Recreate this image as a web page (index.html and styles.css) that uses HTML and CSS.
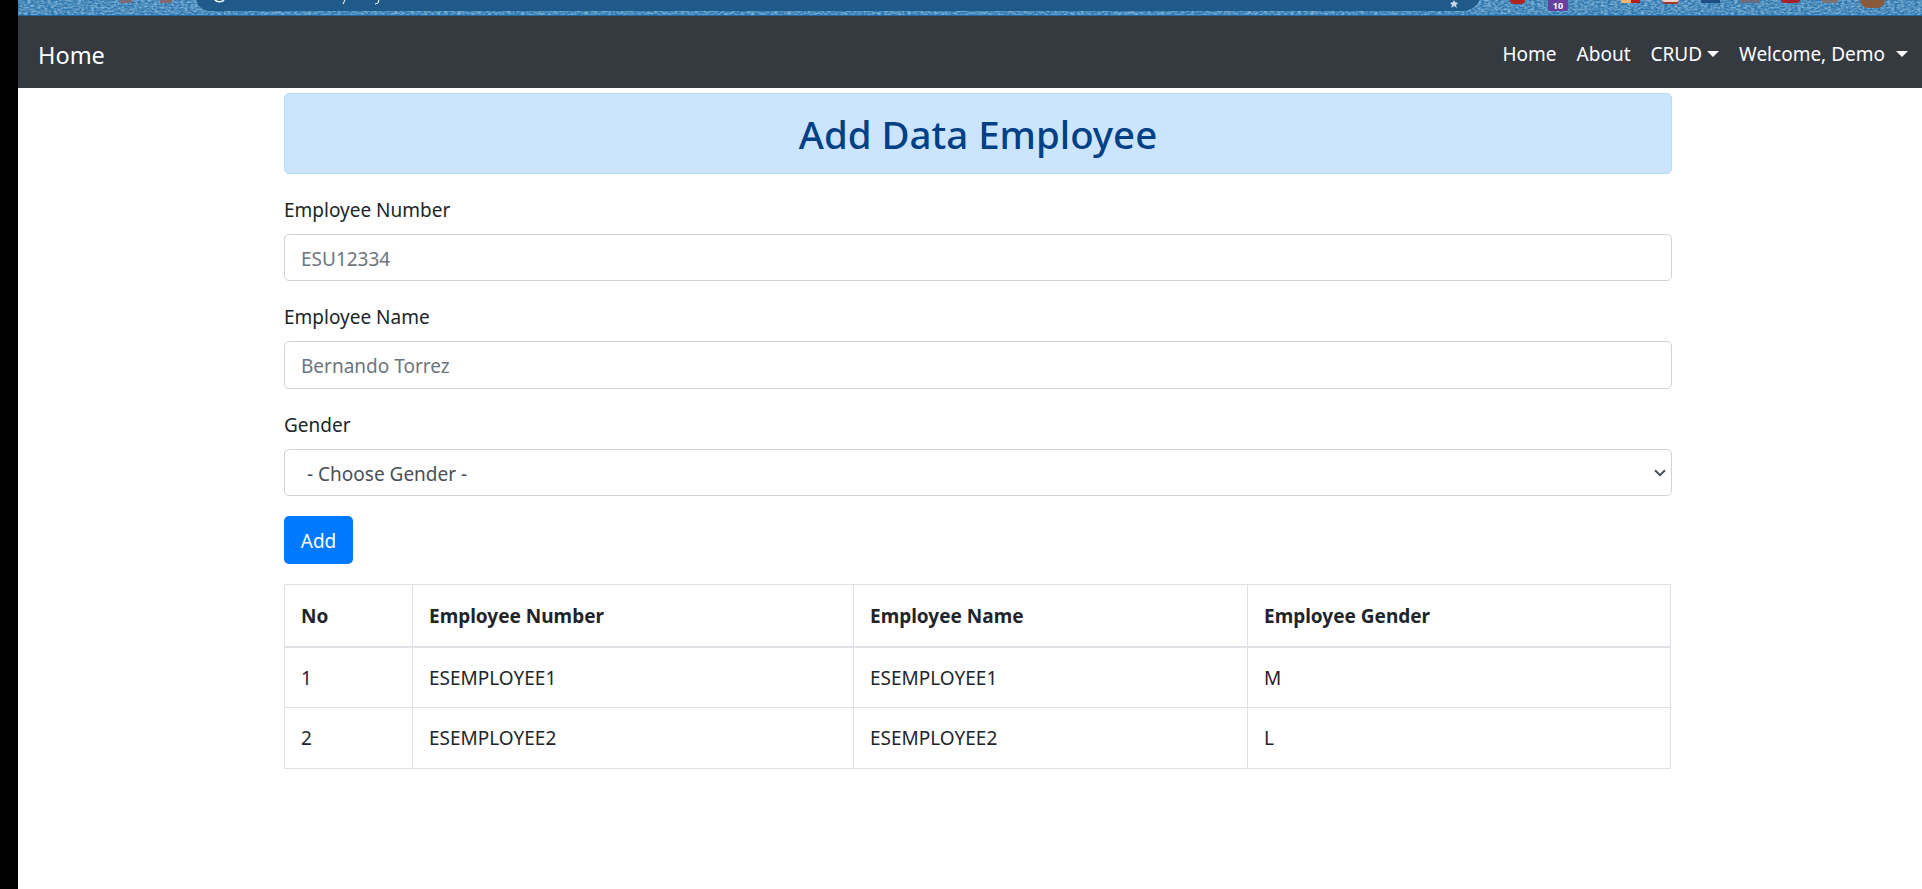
FILE: index.html
```html
<!DOCTYPE html>
<html lang="en">
<head>
  <meta charset="UTF-8">
  <title>Add Data Employee</title>
  <link rel="stylesheet" href="styles.css">
</head>
<body>
  <div class="black-edge"></div>
  <div class="page">
    <div class="desktop-strip">
      <svg class="wallpaper" width="1904" height="16">
        <filter id="grain" x="0" y="0" width="100%" height="100%">
          <feTurbulence type="fractalNoise" baseFrequency="0.3 0.55" numOctaves="2" seed="4"/>
          <feColorMatrix type="matrix" values="0 0 0 0 0.5  0 0 0 0 0.75  0 0 0 0 0.9  1.3 0 0 0 -0.42"/>
        </filter>
        <rect width="1904" height="16" fill="#2f76ae"/>
        <rect width="1904" height="16" filter="url(#grain)"/>
        <rect y="15" width="1904" height="1" fill="#1f6aa5"/>
      </svg>
      <div class="address-tab">
        <svg class="tab-bits" width="1286" height="11">
          <path d="M19 0a5 3 0 0 0 9 0" fill="none" stroke="#fff" stroke-width="1.5"/>
          <path d="M149 0l-2 4M183 0l-1 3-3 1" fill="none" stroke="#fff"/>
          <path d="M1258 0l1 2 3 1-2 2 1 3-3-2-3 2 1-3-2-2 3-1z" fill="#c9d6e2"/>
        </svg>
      </div>
      <span class="tray tray-a"></span>
      <span class="tray tray-b"></span>
      <span class="tray tray-red"></span>
      <span class="tray-badge">10</span>
      <span class="tray tray-orange"></span>
      <span class="tray tray-cup"></span>
      <span class="tray tray-navy"></span>
      <span class="tray tray-grey"></span>
      <span class="tray tray-red2"></span>
      <span class="tray tray-grey2"></span>
      <span class="tray tray-avatar"></span>
    </div>

    <nav class="navbar">
      <a class="brand" href="#">Home</a>
      <ul class="nav-links">
        <li><a href="#">Home</a></li>
        <li><a href="#">About</a></li>
        <li><a class="caret" href="#">CRUD</a></li>
        <li><a class="caret caret-wide" href="#">Welcome, Demo</a></li>
      </ul>
    </nav>

    <main class="container">
      <div class="alert"><h1>Add Data Employee</h1></div>
      <form>
        <div class="form-group">
          <label for="empNumber">Employee Number</label>
          <input type="text" id="empNumber" class="form-control" placeholder="ESU12334">
        </div>
        <div class="form-group">
          <label for="empName">Employee Name</label>
          <input type="text" id="empName" class="form-control" placeholder="Bernando Torrez">
        </div>
        <div class="form-group last">
          <label for="empGender">Gender</label>
          <div class="select-wrap">
            <select id="empGender" class="form-control">
              <option>- Choose Gender -</option>
            </select>
            <svg class="chevron" width="12" height="8" viewBox="0 0 12 8"><path d="M1 1.2l5 5 5-5" fill="none" stroke="#495057" stroke-width="2"/></svg>
          </div>
        </div>
        <button type="submit" class="btn">Add</button>
      </form>

      <table class="table">
        <colgroup>
          <col class="col-no"><col class="col-number"><col class="col-name"><col class="col-gender">
        </colgroup>
        <thead>
          <tr><th>No</th><th>Employee Number</th><th>Employee Name</th><th>Employee Gender</th></tr>
        </thead>
        <tbody>
          <tr><td>1</td><td>ESEMPLOYEE1</td><td>ESEMPLOYEE1</td><td>M</td></tr>
          <tr><td>2</td><td>ESEMPLOYEE2</td><td>ESEMPLOYEE2</td><td>L</td></tr>
        </tbody>
      </table>
    </main>
  </div>
</body>
</html>
```
FILE: styles.css
```css
* {
  box-sizing: border-box;
}
html, body {
  height: 100%;
}
body {
  margin: 0;
  display: flex;
  overflow: hidden;
  background: #fff;
  color: #212529;
  font-family: "Noto Sans", "Open Sans", sans-serif;
  font-size: 19px;
  line-height: 30px;
}
.black-edge {
  width: 18px;
  flex: none;
  background: #000;
}
.page {
  flex: 1;
  min-width: 0;
}

/* bit of the desktop above the browser */
.desktop-strip {
  position: relative;
  height: 16px;
  overflow: hidden;
}
.wallpaper {
  position: absolute;
  left: 0;
  top: 0;
  display: block;
}
.address-tab {
  position: absolute;
  left: 178px;
  top: -10px;
  width: 1286px;
  height: 21px;
  padding-top: 10px;
  background: #1f5a8a;
  border-radius: 0 0 20px 14px;
}
.tab-bits {
  display: block;
}
.tray {
  position: absolute;
  top: 0;
  height: 3px;
}
.tray-a { left: 102px; width: 12px; background: #7d6a72; }
.tray-b { left: 142px; width: 12px; background: #85676e; }
.tray-red { left: 1492px; width: 15px; height: 4px; background: #b5211f; border-radius: 0 0 7px 7px; }
.tray-badge {
  position: absolute;
  left: 1530px;
  top: 0;
  width: 20px;
  height: 11px;
  padding-top: 1px;
  background: #6b3fa0;
  border-radius: 0 0 2px 2px;
  color: #fff;
  font-size: 9px;
  font-weight: 700;
  line-height: 10.4px;
  text-align: center;
}
.tray-orange { left: 1603px; width: 19px; background: linear-gradient(to right, #eeb36d 50%, #bb1d1d 50%); }
.tray-cup { left: 1644px; width: 17px; height: 4px; background: #e9d5c8; border-bottom: 2px solid #a8322c; border-radius: 0 0 6px 6px; }
.tray-navy { left: 1683px; width: 19px; background: #1d4f85; }
.tray-grey { left: 1722px; width: 20px; background: #6b6d7c; }
.tray-red2 { left: 1763px; width: 19px; height: 3px; background: #a8202c; border-radius: 0 0 9px 9px; }
.tray-grey2 { left: 1804px; width: 16px; background: #7b7473; }
.tray-avatar { left: 1842px; width: 25px; height: 8px; background: #8a5a3c; border-radius: 0 0 12px 12px; }

.navbar {
  height: 72px;
  display: flex;
  align-items: center;
  justify-content: space-between;
  padding: 4px 4px 0 20px;
  background: #343a40;
}
.navbar a {
  color: #fff;
  text-decoration: none;
}
.brand {
  font-size: 23.5px;
  line-height: 36px;
  padding-top: 1px;
}
.nav-links {
  display: flex;
  margin: 0;
  padding: 0;
  list-style: none;
}
.nav-links a {
  display: block;
  padding: 0 10px;
}
.caret::after {
  content: "";
  display: inline-block;
  margin-left: 5px;
  vertical-align: 4px;
  border-top: 6px solid #fff;
  border-left: 6px solid transparent;
  border-right: 6px solid transparent;
}
.caret-wide::after {
  margin-left: 11px;
}

.container {
  width: 1388px;
  margin-left: 266px;
  padding-top: 5px;
}
.alert {
  height: 81px;
  margin-bottom: 21.75px;
  display: flex;
  align-items: center;
  justify-content: center;
  background: #cce5ff;
  border: 1px solid #b8daff;
  border-radius: 5px;
}
.alert h1 {
  margin: 0;
  color: #004085;
  font-size: 38.4px;
  font-weight: 500;
  line-height: 46px;
}
.form-group {
  margin-bottom: 22px;
}
.form-group.last {
  margin-bottom: 20px;
}
label {
  display: block;
  margin: -1px 0 9px;
}
.form-control {
  display: block;
  width: 100%;
  height: 47.5px;
  padding: 2px 16px 0;
  background: #fff;
  border: 1px solid #ced4da;
  border-radius: 5px;
  color: #495057;
  font: inherit;
}
.form-control::placeholder {
  color: #6c757d;
}
.select-wrap {
  position: relative;
}
select.form-control {
  appearance: none;
  padding-left: 22px;
}
.chevron {
  position: absolute;
  right: 6px;
  top: 20px;
}
.btn {
  display: block;
  width: 69px;
  height: 48px;
  margin-bottom: 20px;
  padding: 2px 0 0;
  background: #007bff;
  border: none;
  border-radius: 5px;
  color: #fff;
  font: inherit;
}
.table {
  width: 1386px;
  table-layout: fixed;
  border-collapse: collapse;
}
.col-no { width: 128px; }
.col-number { width: 441px; }
.col-name { width: 394px; }
.col-gender { width: 423px; }
.table th, .table td {
  padding: 0 16px;
  border: 1px solid #dee2e6;
  text-align: left;
  height: 61px;
}
.table th {
  height: 62px;
  border-bottom-width: 2px;
  font-weight: 700;
}
```
